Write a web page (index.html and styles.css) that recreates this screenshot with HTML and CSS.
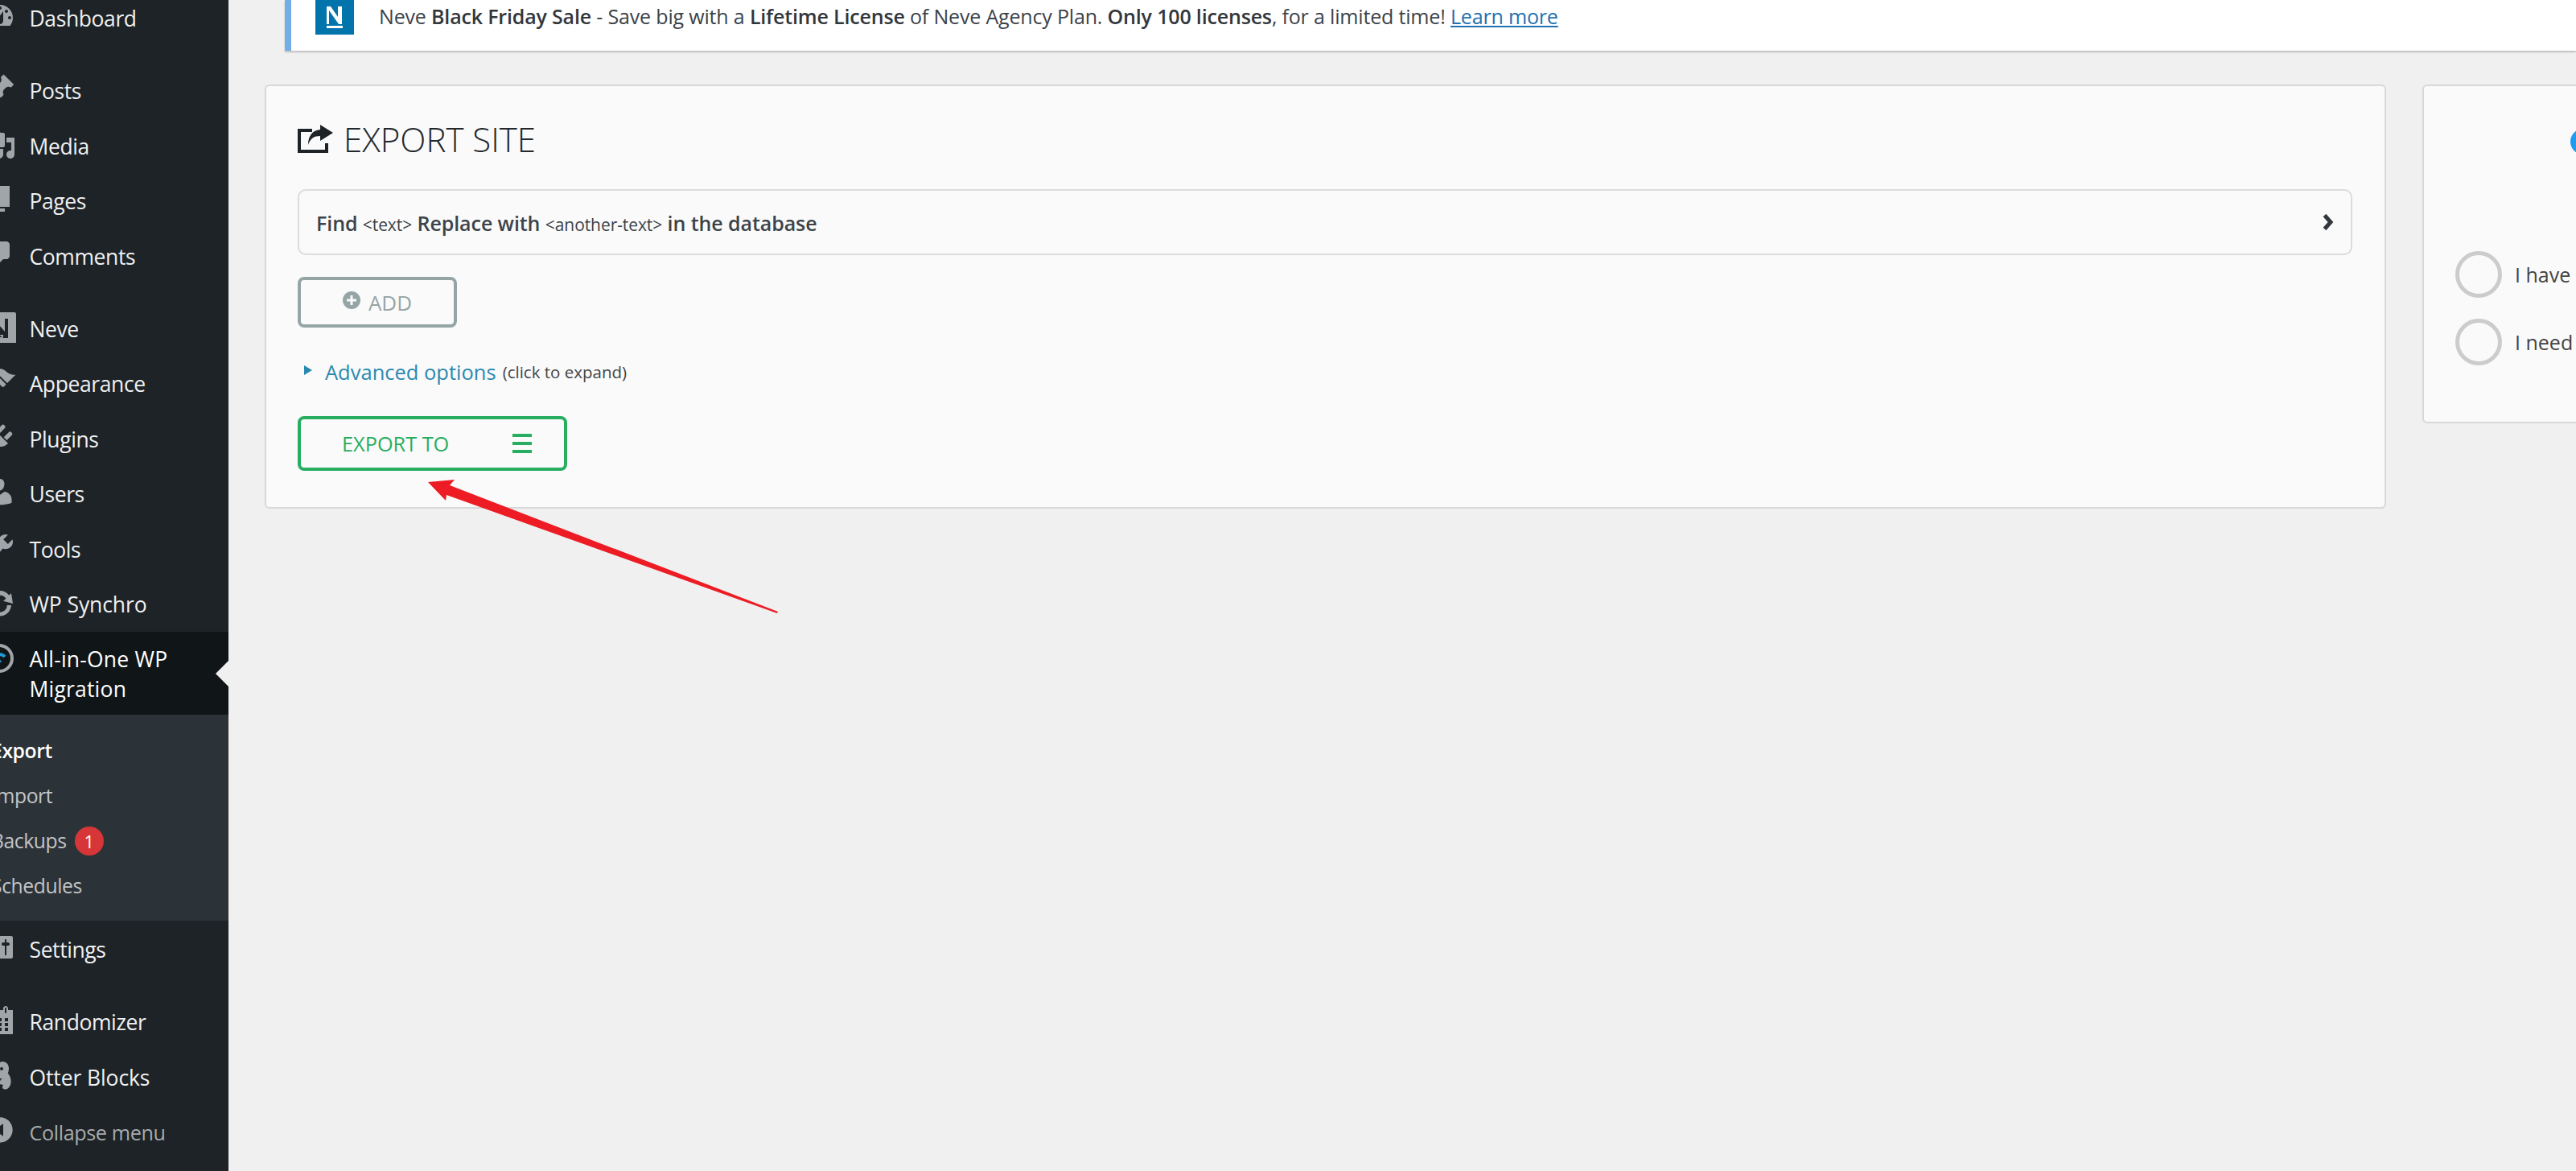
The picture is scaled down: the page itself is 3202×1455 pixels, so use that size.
FILE: index.html
```html
<!DOCTYPE html>
<html lang="en">
<head>
<meta charset="utf-8">
<title>Export Site</title>
<link rel="stylesheet" href="styles.css">
</head>
<body>
<div class="shell">
  <nav class="sidebar">
    <ul class="menu">
      <li class="item"><svg class="ico" viewBox="0 0 20 20"><path fill-rule="evenodd" d="M3.76 16h12.48c1.1-1.37 1.76-3.11 1.76-5 0-4.42-3.58-8-8-8s-8 3.58-8 8c0 1.89.66 3.63 1.76 5zM10 4c.55 0 1 .45 1 1s-.45 1-1 1-1-.45-1-1 .45-1 1-1zM6 6c.55 0 1 .45 1 1s-.45 1-1 1-1-.45-1-1 .45-1 1-1zm8 0c.55 0 1 .45 1 1s-.45 1-1 1-1-.45-1-1 .45-1 1-1zm-5.37 5.55L12 7v6c0 1.1-.9 2-2 2s-2-.9-2-2c0-.57.24-1.08.63-1.45zM4 10c.55 0 1 .45 1 1s-.45 1-1 1-1-.45-1-1 .45-1 1-1zm12 0c.55 0 1 .45 1 1s-.45 1-1 1-1-.45-1-1 .45-1 1-1z"/></svg><span>Dashboard</span></li>
      <li class="sep"></li>
      <li class="item"><svg class="ico" viewBox="0 0 20 20"><path d="M10.44 3.02l1.82-1.82 6.36 6.35-1.83 1.82c-1.05-.68-2.48-.57-3.41.36l-.75.75c-.92.93-1.04 2.35-.35 3.41l-1.83 1.82-2.41-2.41-2.8 2.79c-.42.42-3.38 2.71-3.8 2.29s1.86-3.39 2.28-3.81l2.79-2.79L4.1 9.36l1.83-1.82c1.05.69 2.48.57 3.4-.36l.75-.75c.93-.92 1.05-2.35.36-3.41z"/></svg><span>Posts</span></li>
      <li class="item"><svg class="ico" viewBox="0 0 20 20"><path d="M13 11V4c0-.55-.45-1-1-1h-1.67L9 1H5L3.67 3H2c-.55 0-1 .45-1 1v7c0 .55.45 1 1 1h10c.55 0 1-.45 1-1zM7 4.5c1.38 0 2.5 1.12 2.5 2.5S8.38 9.5 7 9.5 4.5 8.38 4.5 7 5.62 4.5 7 4.5zM14 6h5v10.5c0 1.38-1.12 2.5-2.5 2.5S14 17.88 14 16.5s1.12-2.5 2.5-2.5c.17 0 .34.02.5.05V9h-3V6zm-4 8.05V13h2v3.5c0 1.38-1.12 2.5-2.5 2.5S7 17.88 7 16.5 8.12 14 9.5 14c.17 0 .34.02.5.05z"/></svg><span>Media</span></li>
      <li class="item"><svg class="ico" viewBox="0 0 20 20"><path d="M6 15V2h10v13H6zm-1 1h8v2H3V5h2v11z"/></svg><span>Pages</span></li>
      <li class="item"><svg class="ico" viewBox="0 0 20 20"><path d="M5 2h9c1.1 0 2 .9 2 2v7c0 1.1-.9 2-2 2h-2l-5 5v-5H5c-1.1 0-2-.9-2-2V4c0-1.1.9-2 2-2z"/></svg><span>Comments</span></li>
      <li class="sep"></li>
      <li class="item"><svg class="ico" viewBox="0 0 20 20"><path fill-rule="evenodd" d="M1 1h18c.5 0 1 .5 1 1v18c0 .5-.5 1-1 1H1zM6 5v7l6 5h3V5h-2v8L6 5zM6 15v1.500h6V15z"/></svg><span>Neve</span></li>
      <li class="item"><svg class="ico" viewBox="0 0 20 20"><path d="M14.48 11.06L7.41 3.99l1.5-1.5c.5-.56 2.3-.47 3.51.32 1.21.8 1.43 1.28 2.91 2.1 1.18.64 2.45 1.26 4.45.85zm-.71.71L6.7 4.7 4.93 6.47c-.39.39-.39 1.02 0 1.41l1.06 1.06c.39.39.39 1.03 0 1.42-.6.6-1.43 1.11-2.21 1.69-.35.26-.7.53-1.01.84C1.43 13.23.4 14.96 1.73 16.3c1.34 1.33 3.07.3 4.4-1.04.31-.31.58-.66.84-1.01.58-.78 1.09-1.61 1.69-2.21.39-.39 1.03-.39 1.42 0l1.06 1.06c.39.39 1.02.39 1.41 0z"/></svg><span>Appearance</span></li>
      <li class="item"><svg class="ico" viewBox="0 0 20 20"><path d="M13.11 4.36L9.87 7.6 8 5.73l3.24-3.24c.35-.34 1.05-.2 1.56.32.52.51.66 1.21.31 1.55zm-8 1.77l.91-1.12 9.01 9.01-1.19.84c-.71.71-2.63 1.16-3.82 1.16H6.14L4.9 17.26c-.59.59-1.54.59-2.12 0-.59-.58-.59-1.53 0-2.12l1.24-1.24v-3.88c0-1.13.4-3.19 1.09-3.89zm7.26 3.97l3.24-3.24c.34-.35 1.04-.21 1.55.31.52.51.66 1.21.31 1.55l-3.24 3.25z"/></svg><span>Plugins</span></li>
      <li class="item"><svg class="ico" viewBox="0 0 20 20"><path d="M10 9.25c-2.27 0-2.73-3.44-2.73-3.44C7 4.02 7.82 2 9.97 2c2.16 0 2.98 2.02 2.71 3.81 0 0-.41 3.44-2.68 3.44zm0 2.57L12.72 10c2.39 0 4.52 2.33 4.52 4.53v2.49s-3.65 1.13-7.24 1.13c-3.65 0-7.24-1.13-7.24-1.13v-2.49c0-2.25 1.94-4.48 4.47-4.48z"/></svg><span>Users</span></li>
      <li class="item"><svg class="ico" viewBox="0 0 20 20"><path d="M16.68 9.77c-1.34 1.34-3.3 1.67-4.95.99l-5.41 6.52c-.99.99-2.59.99-3.58 0s-.99-2.59 0-3.57l6.52-5.42c-.68-1.65-.35-3.61.99-4.95 1.28-1.28 3.12-1.62 4.72-1.06l-2.89 2.89 2.82 2.82 2.86-2.87c.53 1.58.18 3.39-1.08 4.66z"/></svg><span>Tools</span></li>
      <li class="item wide"><svg class="ico" viewBox="0 0 20 20"><path d="M10 3a7 7 0 0 1 5.600 2.800L17 4.600l1 6.400-6-1.600 1.700-1.500A4.400 4.400 0 0 0 5.600 10H3a7 7 0 0 1 7-7zM3 12l5.400 1.600-1.600 1.300A4.400 4.400 0 0 0 14.400 12H17a7 7 0 0 1-12.400 4.200L3 17.500z"/></svg><span>WP Synchro</span></li>
      <li class="item active"><svg class="ico" viewBox="0 0 20 20"><circle class="ring" cx="9.500" cy="10" r="8"/><circle class="hub" cx="9.500" cy="10" r="5.500"/><path class="arc" d="M6 11.500a4 4 0 0 1 7-2.500"/><path class="arc-tip" d="M9.500 9.500l1.500 3h-3z"/></svg><span class="two-line">All-in-One WP Migration</span></li>
    </ul>
    <ul class="submenu">
      <li class="sub current">Export</li>
      <li class="sub">Import</li>
      <li class="sub">Backups <b class="badge">1</b></li>
      <li class="sub">Schedules</li>
    </ul>
    <ul class="menu-low">
      <li class="item"><svg class="ico" viewBox="0 0 20 20"><path d="M18 16V4c0-.55-.45-1-1-1H3c-.55 0-1 .45-1 1v12c0 .55.45 1 1 1h14c.55 0 1-.45 1-1zM8 11h1c.55 0 1 .45 1 1s-.45 1-1 1H8v1.500c0 .28-.22.5-.5.5s-.5-.22-.5-.5V13H6c-.55 0-1-.45-1-1s.45-1 1-1h1V5.500c0-.28.22-.5.5-.5s.5.22.5.5V11zm5-2h-1c-.55 0-1-.45-1-1s.45-1 1-1h1V5.500c0-.28.22-.5.5-.5s.5.22.5.5V7h1c.55 0 1 .45 1 1s-.45 1-1 1h-1v5.500c0 .28-.22.5-.5.5s-.5-.22-.5-.5V9z"/></svg><span>Settings</span></li>
      <li class="sep"></li>
      <li class="item"><svg class="ico" viewBox="0 0 20 20"><path fill-rule="evenodd" d="M15 4h3v15H2V4h3V3c0-.41.15-.76.44-1.06.29-.29.65-.44 1.06-.44s.77.15 1.06.44c.29.3.44.65.44 1.06v1h4V3c0-.41.15-.76.44-1.06.29-.29.65-.44 1.06-.44s.77.15 1.06.44c.29.3.44.65.44 1.06v1zM6 3v2.500c0 .14.05.26.15.36.09.09.21.14.35.14s.26-.05.36-.14c.09-.1.14-.22.14-.36V3c0-.14-.05-.26-.14-.35-.1-.1-.22-.15-.36-.15s-.26.05-.35.15c-.1.09-.15.21-.15.35zm7 0v2.500c0 .14.05.26.14.36.1.09.22.14.36.14s.26-.05.35-.14c.1-.1.15-.22.15-.36V3c0-.14-.05-.26-.15-.35-.09-.1-.21-.15-.35-.15s-.26.05-.36.15c-.09.09-.14.21-.14.35zM7 9H5v2h2zm4 0H9v2h2zm4 0h-2v2h2zM7 12H5v2h2zm4 0H9v2h2zm4 0h-2v2h2zM7 15H5v2h2zm4 0H9v2h2zm4 0h-2v2h2z"/></svg><span>Randomizer</span></li>
      <li class="item wide"><svg class="ico" viewBox="0 0 20 20"><path fill-rule="evenodd" d="M11.500 1.500c2.600 0 4 2 4 4.200 0 1.300-.3 2.200-.6 3 1.300 1.600 2 3.400 1.900 5.300-.1 2.400-1.400 4.800-3.600 4.800-1.800 0-2.200-1.600-1.200-2.600-.6-.4-1.400-.6-2.300-.6 0-1.600.6-2.800 1.600-3.600-1.800.2-3.300-.6-3.800-2-.5-1.400-.2-3 .4-4.600.6-1.700 1.800-3.900 3.600-3.900zM11 5a1 1 0 1 0 0 2 1 1 0 0 0 0-2z"/></svg><span>Otter Blocks</span></li>
      <li class="item collapse"><svg class="ico" viewBox="0 0 20 20"><path d="M10 2.160c4.330 0 7.840 3.510 7.840 7.840s-3.510 7.840-7.840 7.840S2.160 14.330 2.160 10 5.710 2.160 10 2.160zm2 11.720V6.120L6.180 9.970z"/></svg><span>Collapse menu</span></li>
    </ul>
  </nav>

  <main class="content">
    <div class="notice">
      <svg class="notice-logo" viewBox="0 0 48 43"><rect width="48" height="43" fill="#0274ac"/><path fill="#fff" d="M14 8h5l9 13V8h5v22h-4L17 13v17h-3zM14 32h20v3H14z"/></svg>
      <p class="notice-text">Neve <strong>Black Friday Sale</strong> - Save big with a <strong>Lifetime License</strong> of Neve Agency Plan. <strong>Only 100 licenses</strong>, for a limited time! <a class="notice-link">Learn more</a></p>
    </div>

    <div class="columns">
      <section class="card export-card">
        <h1 class="title">
          <svg class="title-ico" viewBox="0 0 44 36"><path fill="none" stroke="#1d2327" stroke-width="4" d="M18 8H2v26h34V24"/><path fill="#1d2327" d="M28 1l16 10-16 10v-6c-8 0-12 3-15 11 0-11 5-18 15-19z"/></svg>
          <span>EXPORT SITE</span>
        </h1>

        <div class="find-box">
          <p class="find-text">Find <small>&lt;text&gt;</small> Replace with <small>&lt;another-text&gt;</small> in the database</p>
          <svg class="chevron" viewBox="0 0 14 22"><path fill="none" stroke="#32373c" stroke-width="5" d="M2.500 2.500L10 11l-7.500 8.500"/></svg>
        </div>

        <div class="add-button">
          <svg class="add-ico" viewBox="0 0 22 22"><circle cx="11" cy="11" r="11" fill="#95a5a6"/><path fill="#fafafa" d="M9.500 5h3v4.500H17v3h-4.500V17h-3v-4.500H5v-3h4.500z"/></svg>
          <span>ADD</span>
        </div>

        <div class="advanced">
          <i class="tri"></i>
          <span class="advanced-link">Advanced options</span>
          <span class="advanced-hint">(click to expand)</span>
        </div>

        <div class="export-button">
          <span>EXPORT TO</span>
          <span class="burger"><i></i><i></i><i></i></span>
        </div>
      </section>

      <section class="card side-card">
        <div class="blue-dot"></div>
        <label class="radio-row"><i class="radio"></i><span>I have</span></label>
        <label class="radio-row"><i class="radio"></i><span>I need</span></label>
      </section>
    </div>

    <svg class="annotation" viewBox="0 0 3202 1455"><polygon fill="#ed1c24" points="532,599 565,596 559,603 967,760 966,762 555,615 554,622"/></svg>
  </main>
</div>
</body>
</html>
```
FILE: styles.css
```css
* { box-sizing: border-box; }
html, body { margin: 0; height: 100%; overflow: hidden; }
body { background: #f0f0f0; font-family: "Open Sans", "Liberation Sans", sans-serif; color: #3c434a; }
ul { list-style: none; margin: 0; padding: 0; }
p, h1 { margin: 0; }

.shell { display: flex; width: 3202px; height: 1455px; overflow: hidden; }

/* Sidebar */
.sidebar { width: 284px; flex: none; background: #1d2327; overflow: hidden; font-size: 26.5px; letter-spacing: -0.4px; color: #f0f0f1; }
.menu { margin-top: -12px; }
.menu-low .item:first-child { margin-top: 1px; }
.sep { height: 21.5px; }
.item { display: flex; height: 68.5px; align-items: flex-start; position: relative; }
.item.wide { letter-spacing: -0.1px; }
.item > span { padding-top: 15px; line-height: 40px; white-space: nowrap; }
.ico { width: 40px; height: 40px; flex: none; margin: 12px 16.5px 0 -20px; fill: #a0a5aa; }
.item.active { height: 103.5px; background: #101517; color: #fff; letter-spacing: 0.2px; }
.item.active .ico { margin-top: 13px; }
.item.active > span { padding-top: 16px; line-height: 37px; width: 220px; white-space: normal; }
.item.active::after { content: ""; position: absolute; right: 0; top: 36px; border: 16px solid transparent; border-right-color: #f0f0f0; border-left-width: 0; }
.ring { fill: none; stroke: #a0a5aa; stroke-width: 2; }
.hub { fill: #101517; }
.arc { fill: none; stroke: #1e9ad6; stroke-width: 2; }
.arc-tip { fill: #1e9ad6; }
.submenu { background: #2c3338; padding: 17px 0 15px; height: 256px; font-size: 24.7px; }
.sub { height: 56px; line-height: 56px; margin-left: -11px; color: #c3c4c7; white-space: nowrap; display: flex; align-items: center; gap: 10px; }
.sub.current { color: #fff; font-weight: 600; }
.badge { width: 36px; height: 36px; border-radius: 50%; background: #d63638; color: #fff; font-size: 22px; font-weight: 400; line-height: 36px; text-align: center; letter-spacing: 0; }
.item.collapse { color: #a7aaad; font-size: 25.2px; }

/* Content */
.content { flex: 1; min-width: 0; position: relative; overflow: hidden; }
.notice { display: flex; align-items: flex-start; gap: 31px; height: 63px; margin-left: 70px; padding-left: 30px; background: #fff; border-left: 8px solid #72aee6; box-shadow: 0 2px 2px rgba(0,0,0,.2); font-size: 25px; letter-spacing: -0.17px; }
.notice-logo { width: 48px; height: 43px; flex: none; display: block; }
.notice-text { line-height: 41px; white-space: nowrap; }
.notice-text strong { font-weight: 600; color: #32373c; }
.notice-link { color: #2271b1; text-decoration: underline; }

.columns { display: flex; gap: 45px; margin: 42px 0 0 45px; align-items: flex-start; }
.card { background: #fafafa; border: 2px solid #d8d8d8; border-radius: 6px; flex: none; }
.export-card { width: 2637px; height: 527px; padding: 37px 40px 0 39px; }
.title { display: flex; align-items: center; height: 56px; font-size: 42px; font-weight: 300; color: #23282d; gap: 13px; }
.title-ico { width: 44px; height: 36px; flex: none; }
.find-box { display: flex; align-items: center; justify-content: space-between; height: 82px; margin-top: 35px; padding: 0 21px; border: 2px solid #dcdcdc; border-radius: 10px; }
.find-text { font-size: 25px; font-weight: 600; letter-spacing: -0.08px; color: #3c434a; padding-top: 2px; }
.find-text small { font-size: 21px; font-weight: 400; }
.chevron { width: 14px; height: 22px; }
.add-button { display: flex; align-items: center; justify-content: center; gap: 10px; width: 198px; height: 63px; margin-top: 27px; border: 4px solid #95a5a6; border-radius: 8px; font-size: 26px; font-weight: 500; color: #95a5a6; }
.add-ico { width: 22px; height: 22px; margin-top: -6px; }
.advanced { display: flex; align-items: center; height: 40px; margin-top: 35px; padding-left: 8px; }
.tri { width: 0; height: 0; border-left: 10px solid #2a88b0; border-top: 6px solid transparent; border-bottom: 6px solid transparent; margin: -4px 16px 0 0; }
.advanced-link { font-size: 25.5px; color: #2a88b0; margin-right: 8px; }
.advanced-hint { font-size: 20.5px; color: #444; }
.export-button { display: flex; align-items: center; width: 335px; height: 68px; margin-top: 35px; padding: 0 40px 0 51px; border: 4px solid #27ae60; border-radius: 8px; font-size: 25.3px; color: #27ae60; }
.burger { margin-left: auto; display: flex; flex-direction: column; gap: 6px; }
.burger i { display: block; width: 24px; height: 4px; background: #27ae60; }

.side-card { width: 500px; height: 421px; padding: 53px 0 0 39px; }
.blue-dot { width: 32px; height: 32px; margin: 0 0 120px 143px; border-radius: 50%; background: #1f9bef; }
.radio-row { display: flex; align-items: center; gap: 16px; margin-bottom: 26px; font-size: 25px; color: #444; white-space: nowrap; }
.radio { width: 58px; height: 58px; flex: none; border: 5px solid #ccc; border-radius: 50%; }

.annotation { position: absolute; left: -284px; top: 0; width: 3202px; height: 1455px; pointer-events: none; }
```
